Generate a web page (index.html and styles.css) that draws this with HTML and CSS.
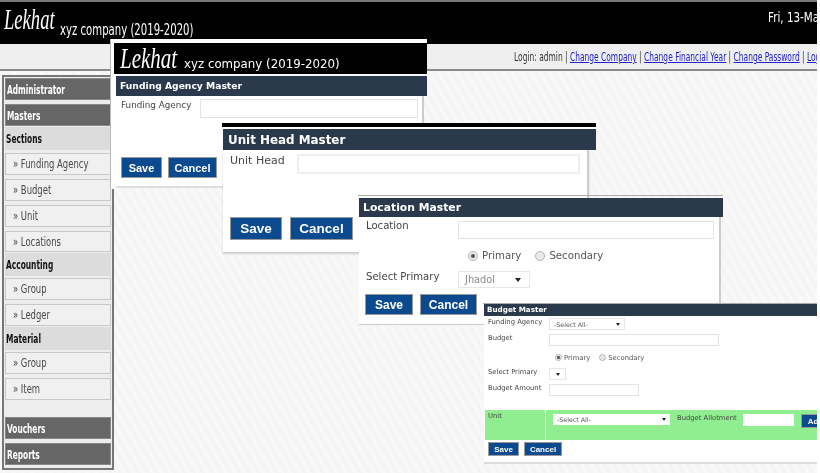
FILE: index.html
```html
<!DOCTYPE html>
<html lang="en">
<head>
<meta charset="utf-8">
<title>Lekhat</title>
<link rel="stylesheet" href="styles.css">
</head>
<body>
<div class="page">
  <header class="topbar">
    <div class="brand"><span class="logo">Lekhat</span><span class="company">xyz company (2019-2020)</span></div>
    <div class="date">Fri, 13-Mar-2020</div>
  </header>
  <nav class="userbar"><span class="userline">Login: admin | <a href="#">Change Company</a> | <a href="#">Change Financial Year</a> | <a href="#">Change Password</a> | <a href="#">Logout</a></span></nav>
  <aside class="sidebar">
    <div class="menu-head"><span>Administrator</span></div>
    <div class="menu-head"><span>Masters</span></div>
    <div class="menu-section"><span>Sections</span></div>
    <div class="menu-item"><span>» Funding Agency</span></div>
    <div class="menu-item"><span>» Budget</span></div>
    <div class="menu-item"><span>» Unit</span></div>
    <div class="menu-item menu-item-short"><span>» Locations</span></div>
    <div class="menu-section"><span>Accounting</span></div>
    <div class="menu-item"><span>» Group</span></div>
    <div class="menu-item"><span>» Ledger</span></div>
    <div class="menu-section"><span>Material</span></div>
    <div class="menu-item"><span>» Group</span></div>
    <div class="menu-item"><span>» Item</span></div>
    <div class="menu-gap"></div>
    <div class="menu-head"><span>Vouchers</span></div>
    <div class="menu-head"><span>Reports</span></div>
  </aside>

  <section class="win win-funding">
    <div class="mini-brand"><span class="mini-logo">Lekhat</span><span class="mini-company">xyz company (2019-2020)</span></div>
    <h2 class="win-title">Funding Agency Master</h2>
    <div class="win-body">
      <div class="row"><label class="lbl">Funding Agency</label><span class="field"></span></div>
      <div class="actions"><button class="btn">Save</button><button class="btn">Cancel</button></div>
    </div>
  </section>

  <section class="win win-unit">
    <div class="black-rule"></div>
    <h2 class="win-title">Unit Head Master</h2>
    <div class="win-body">
      <div class="row"><label class="lbl">Unit Head</label><span class="field"></span></div>
      <div class="actions"><button class="btn">Save</button><button class="btn">Cancel</button></div>
    </div>
  </section>

  <section class="win win-location">
    <h2 class="win-title">Location Master</h2>
    <div class="win-body">
      <div class="row"><label class="lbl">Location</label><span class="field"></span></div>
      <div class="radios">
        <span class="radio on"></span><span class="radio-text">Primary</span>
        <span class="radio"></span><span class="radio-text">Secondary</span>
      </div>
      <div class="row row-select"><label class="lbl">Select Primary</label><span class="select sel-jhadol"><span>Jhadol</span><i class="arrow"></i></span></div>
      <div class="actions"><button class="btn">Save</button><button class="btn">Cancel</button></div>
    </div>
  </section>

  <section class="win win-budget">
    <h2 class="win-title">Budget Master</h2>
    <div class="win-body">
      <div class="row"><label class="lbl">Funding Agency</label><span class="select sel-agency"><span>-Select All-</span><i class="arrow"></i></span></div>
      <div class="row"><label class="lbl">Budget</label><span class="field field-budget"></span></div>
      <div class="radios">
        <span class="radio on"></span><span class="radio-text">Primary</span>
        <span class="radio"></span><span class="radio-text">Secondary</span>
      </div>
      <div class="row"><label class="lbl">Select Primary</label><span class="select sel-empty"><span></span><i class="arrow"></i></span></div>
      <div class="row"><label class="lbl">Budget Amount</label><span class="field field-amount"></span></div>
      <div class="green-row">
        <div class="green-label">Unit</div>
        <div class="green-main">
          <span class="select sel-unit"><span>-Select All-</span><i class="arrow"></i></span>
          <span class="allot">Budget Allotment</span>
          <span class="field field-allot"></span>
          <button class="btn btn-add">Add</button>
        </div>
      </div>
      <div class="actions"><button class="btn">Save</button><button class="btn">Cancel</button></div>
    </div>
  </section>
</div>
</body>
</html>
```
FILE: styles.css
```css
* { box-sizing: border-box; }
html, body { margin: 0; padding: 0; }
body { width: 820px; height: 473px; overflow: hidden; background: #fff; font-family: "DejaVu Sans", Verdana, sans-serif; }
.page {
  position: relative; width: 817px; height: 473px; overflow: hidden; filter: blur(.3px);
  background: repeating-linear-gradient(60deg, #f4f4f4 0, #f9f9f9 4px, #f4f4f4 8px);
}
.topbar {
  height: 44px; background: #000; border-top: 2px solid #777; color: #fff;
  display: flex; white-space: nowrap; overflow: hidden;
}
.brand { width: 768px; flex: none; display: flex; align-items: flex-start; padding-left: 4px; }
.logo { display: inline-block; width: 56px; flex: none; font: italic 30px/34px "Liberation Serif", serif; transform: scaleX(.62); transform-origin: 0 0; }
.company { display: inline-block; flex: none; font: 15px/20px "DejaVu Sans", sans-serif; margin-top: 18px; transform: scaleX(.675); transform-origin: 0 0; }
.date { flex: none; font: 14px/18px "DejaVu Sans", sans-serif; padding-top: 6px; transform: scaleX(.74); transform-origin: 0 0; }
.userbar {
  height: 27px; background: #efefef; border-bottom: 2px solid #8a8a8a;
  white-space: nowrap; padding-left: 514px; overflow: hidden;
}
.userline { display: inline-block; font: 12.5px/25px "DejaVu Sans", sans-serif; color: #333; transform: scaleX(.6); transform-origin: 0 0; }
.userbar a { color: #2222cc; }
.sidebar {
  position: absolute; left: 2px; top: 75px; width: 112px; height: 395px;
  background: #ededed; border: 2px solid #777; padding: 1px 1px 3px;
  display: flex; flex-direction: column; font-size: 13px; white-space: nowrap;
}
.sidebar span { display: inline-block; transform-origin: 0 0; }
.menu-head {
  flex: none; height: 22px; margin-bottom: 4px; background: #666; color: #fff; font-weight: 700;
  line-height: 21px; padding-left: 1px; border: 1px solid #888;
}
.menu-head span { transform: scaleX(.57); }
.menu-section {
  flex: none; height: 23px; margin-top: -3px; margin-bottom: 2px; background: #dcdcdc; color: #111; font-weight: 700; line-height: 23px; padding-left: 1px;
}
.menu-section span { transform: scaleX(.575); }
.menu-head + .menu-section { margin-bottom: 3px; }
.menu-item {
  flex: none; height: 22px; margin-bottom: 4px; background: #f0f0f0; border: 1px solid #c8c8c8;
  color: #484848; line-height: 20px; padding-left: 7px;
}
.menu-item span { transform: scaleX(.65); }
.menu-item-short { height: 21px; }
.menu-gap { flex: none; height: 15px; margin-top: -3px; margin-bottom: 1px; }
.win { position: absolute; }
.win-title {
  margin: 0; background: #2a3a4c; color: #fff; font-weight: 700; white-space: nowrap; overflow: hidden;
}
.win-body { position: relative; background: #fff; }
.row { display: flex; align-items: flex-start; }
.lbl { color: #444; white-space: nowrap; }
.field { display: block; background: #fff; border: 1px solid #e3e3e3; }
.actions { display: flex; }
.btn {
  background: #0b4a8f; color: #fff; border: 1px solid #9a9a9a; font-family: "Liberation Sans", Arial, sans-serif; font-weight: 700; padding: 0;
}
.select {
  display: flex; align-items: center; justify-content: space-between; background: #fff; border: 1px solid #e6e6e6; color: #555; white-space: nowrap;
}
.arrow { width: 0; height: 0; border-left: 3px solid transparent; border-right: 3px solid transparent; border-top: 4px solid #222; }
.radios { display: flex; align-items: center; color: #555; }
.radio { display: block; border-radius: 50%; background: #e8e8e8; border: 1px solid #b5b5b5; position: relative; }
.radio.on::after { content: ""; position: absolute; inset: 25%; border-radius: 50%; background: #555; }

.win-funding { left: 110px; top: 39px; width: 317px; height: 150px; padding: 4px 0 0 3px; background: linear-gradient(#fff, #fff) 0 0 / 6px 100% no-repeat, linear-gradient(#fff, #fff) 0 0 / 100% 4px no-repeat; border-left: 1px solid #bbb; }
.mini-brand { height: 31px; background: #000; color: #fff; display: flex; align-items: flex-start; padding-left: 6px; white-space: nowrap; overflow: hidden; }
.mini-logo { display: inline-block; width: 64px; flex: none; font: italic 30px/30px "Liberation Serif", serif; transform: scaleX(.7); transform-origin: 0 0; }
.mini-company { font-size: 11.8px; line-height: 16px; margin-top: 13px; flex: none; }
.win-funding .win-title { margin: 2px 0 0 2px; height: 20px; font-size: 9.2px; line-height: 20px; padding-left: 4px; }
.win-funding .win-body { margin-left: 2px; padding: 3px 0 0 5px; width: 308px; height: 92px; border-right: 2px solid #ccc; border-bottom: 2px solid #ddd; }
.win-funding .lbl { width: 79px; font-size: 8.8px; line-height: 13px; }
.win-funding .field { width: 218px; height: 19px; }
.win-funding .actions { margin-top: 39px; gap: 6px; }
.win-funding .btn { height: 21px; font-size: 11px; }
.win-funding .btn:first-child { width: 41px; }
.win-funding .btn:last-child { width: 49px; }

.win-unit { left: 221px; top: 123px; width: 375px; height: 129px; padding-left: 2px; }
.black-rule { height: 4px; margin-left: -1px; background: #000; box-shadow: 0 2px 0 #fff; margin-bottom: 2px; }
.win-unit .win-title { height: 21px; font-size: 11.9px; line-height: 22px; padding-left: 5px; }
.win-unit .win-body { padding: 4px 0 0 7px; width: 366px; height: 102px; border-right: 2px solid #ccc; box-shadow: 0 2px 2px #ccc; }
.win-unit .lbl { width: 67px; font-size: 11px; line-height: 13px; }
.win-unit .field { width: 283px; height: 20px; border-width: 2px; border-color: #eee; }
.win-unit .actions { margin-top: 43px; gap: 8px; }
.win-unit .btn { height: 23px; font-size: 13.5px; }
.win-unit .btn:first-child { width: 52px; }
.win-unit .btn:last-child { width: 63px; }

.win-location { left: 358px; top: 195px; width: 365px; height: 130px; padding: 2px 0 0 1px; border-top: 1px solid #aaa; }
.win-location .win-title { height: 19px; font-size: 10.8px; line-height: 19px; padding-left: 4px; }
.win-location .win-body { padding: 2px 0 0 7px; width: 362px; height: 108px; border-right: 2px solid #ccc; border-bottom: 1px solid #ccc; }
.win-location .lbl { width: 92px; font-size: 10.1px; line-height: 13px; }
.win-location .row:first-child .field { margin-top: 2px; }
.win-location .field { width: 256px; height: 18px; }
.win-location .radios { margin: 9px 0 0 102px; height: 15px; font-size: 10.2px; }
.win-location .radio { width: 10px; height: 10px; }
.win-location .radio-text { margin: 0 14px 0 4px; }
.win-location .radio-text:last-child { margin-right: 0; }
.win-location .row-select { margin-top: 7px; }
.sel-jhadol { width: 72px; height: 17px; font-size: 9.8px; padding: 0 8px 0 6px; color: #888; margin-top: 1px; }
.win-location .actions { margin: 6px 0 0 -1px; gap: 7px; }
.win-location .btn { height: 21px; font-size: 12px; }
.win-location .btn:first-child { width: 48px; }
.win-location .btn:last-child { width: 57px; }

.win-budget { left: 483px; top: 303px; width: 334px; height: 161px; padding-left: 1px; border-top: 1px solid #aaa; filter: blur(.3px); }
.win-budget .win-title { height: 12px; font-size: 7.2px; line-height: 12px; padding-left: 3px; }
.win-budget .win-body { padding: 2px 0 0 0; font-size: 6.8px; height: 148px; border-bottom: 2px solid #ddd; }
.win-budget .row { padding-left: 4px; margin-bottom: 4px; }
.win-budget .lbl { width: 61px; font-size: 6.8px; line-height: 9px; }
.sel-agency { width: 76px; height: 12px; font-size: 6.3px; padding: 0 4px; }
.field-budget { width: 170px; height: 12px; }
.win-budget .radios { margin: 6px 0 5px 71px; height: 11px; font-size: 6.8px; }
.win-budget .radio { width: 7px; height: 7px; }
.win-budget .radio-text { margin: 0 9px 0 2px; }
.sel-empty { width: 17px; height: 12px; padding: 0 5px; justify-content: flex-end; }
.win-budget .arrow { border-width: 3px 2px 0; }
.field-amount { width: 90px; height: 12px; }
.green-row { display: flex; gap: 1px; height: 30px; margin: 14px 0 0 1px; }
.green-label { width: 60px; background: #90ee90; padding: 2px 0 0 3px; color: #444; line-height: 9px; }
.green-main { flex: 1; background: #90ee90; display: flex; align-items: flex-start; padding: 4px 0 0 7px; white-space: nowrap; overflow: hidden; }
.sel-unit { width: 117px; height: 11px; flex: none; border: 0; font-size: 6.3px; padding: 0 4px; }
.allot { margin: 0 6px 0 7px; color: #444; line-height: 9px; }
.field-allot { width: 51px; height: 12px; flex: none; border: 0; }
.btn-add { flex: none; width: 30px; height: 14px; margin-left: 7px; font-size: 8px; text-align: left; padding-left: 6px; }
.win-budget .actions { margin: 2px 0 0 4px; gap: 5px; }
.win-budget .actions .btn { height: 14px; font-size: 8px; }
.win-budget .actions .btn:first-child { width: 31px; }
.win-budget .actions .btn:last-child { width: 38px; }
```
